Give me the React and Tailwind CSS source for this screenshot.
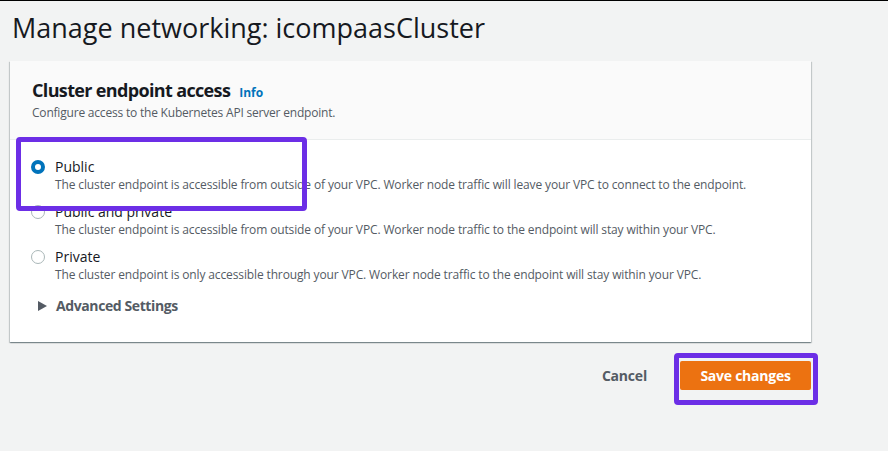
import React from "react";

function Radio({ checked }) {
  return checked ? (
    <span className="mt-[3px] box-border inline-block h-[14px] w-[14px] shrink-0 rounded-full border-[4px] border-[#0073bb] bg-white" />
  ) : (
    <span className="mt-[3px] box-border inline-block h-[14px] w-[14px] shrink-0 rounded-full border border-[#aab7b8] bg-white" />
  );
}

function Option({ checked, label, desc }) {
  return (
    <div className="flex gap-[10px]">
      <Radio checked={checked} />
      <div className="flex flex-col">
        <span className="text-[14px] leading-[20px] text-[#16191f]">{label}</span>
        <span className="text-[12px] leading-[16px] tracking-[-0.13px] text-[#545b64]">{desc}</span>
      </div>
    </div>
  );
}

export default function App() {
  return (
    <div
      className="relative h-[451px] w-[888px] overflow-hidden border-t border-black bg-[#f2f3f3]"
      style={{ fontFamily: '"Open Sans", "Noto Sans", Arial, sans-serif' }}
    >
      <h1 className="ml-[12px] mt-[9px] text-[27px] leading-[36px] text-[#16191f]">
        Manage networking: icompaasCluster
      </h1>
      <div className="ml-[10px] mt-[15px] w-[801px] bg-white shadow-[0_1px_1px_0_rgba(0,28,36,0.3),1px_1px_1px_0_rgba(0,28,36,0.15),-1px_1px_1px_0_rgba(0,28,36,0.15)]">
        <div className="border-b border-[#eaeded] bg-[#fafafa] px-[22px] pb-[18px] pt-[17px]">
          <div className="flex items-baseline gap-[9px]">
            <span className="text-[18px] font-bold leading-[24px] tracking-[-0.65px] text-[#16191f]">Cluster endpoint access</span>
            <span className="text-[12px] font-bold text-[#0073bb]">Info</span>
          </div>
          <div className="mt-[3px] text-[12px] leading-[16px] tracking-[-0.2px] text-[#545b64]">
            Configure access to the Kubernetes API server endpoint.
          </div>
        </div>
        <div className="flex flex-col gap-[9px] px-[21px] pb-[26px] pt-[17px]">
          <Option
            checked
            label="Public"
            desc="The cluster endpoint is accessible from outside of your VPC. Worker node traffic will leave your VPC to connect to the endpoint."
          />
          <Option
            label="Public and private"
            desc="The cluster endpoint is accessible from outside of your VPC. Worker node traffic to the endpoint will stay within your VPC."
          />
          <Option
            label="Private"
            desc="The cluster endpoint is only accessible through your VPC. Worker node traffic to the endpoint will stay within your VPC."
          />
          <div className="mt-[4px] flex items-center gap-[9px] pl-[7px]">
            <svg width="9" height="10" viewBox="0 0 9 10">
              <path d="M0 0 L9 5 L0 10 Z" fill="#545b64" />
            </svg>
            <span className="text-[14px] font-bold leading-[20px] tracking-[-0.4px] text-[#545b64]">Advanced Settings</span>
          </div>
        </div>
      </div>
      <div className="mr-[77px] mt-[19px] flex items-center justify-end gap-[33px]">
        <span className="text-[14px] font-bold tracking-[-0.2px] text-[#545b64]">Cancel</span>
        <button className="h-[29px] w-[131px] rounded-[2px] bg-[#ec7211] text-[14px] font-bold tracking-[-0.25px] text-white">
          Save changes
        </button>
      </div>

      {/* annotation overlays */}
      <div className="absolute left-[16px] top-[136px] h-[74px] w-[291px] rounded-[4px] border-[5px] border-[#6c2ee6]" />
      <div className="absolute left-[674px] top-[352px] h-[52px] w-[144px] rounded-[4px] border-[5px] border-[#6c2ee6]" />
    </div>
  );
}
